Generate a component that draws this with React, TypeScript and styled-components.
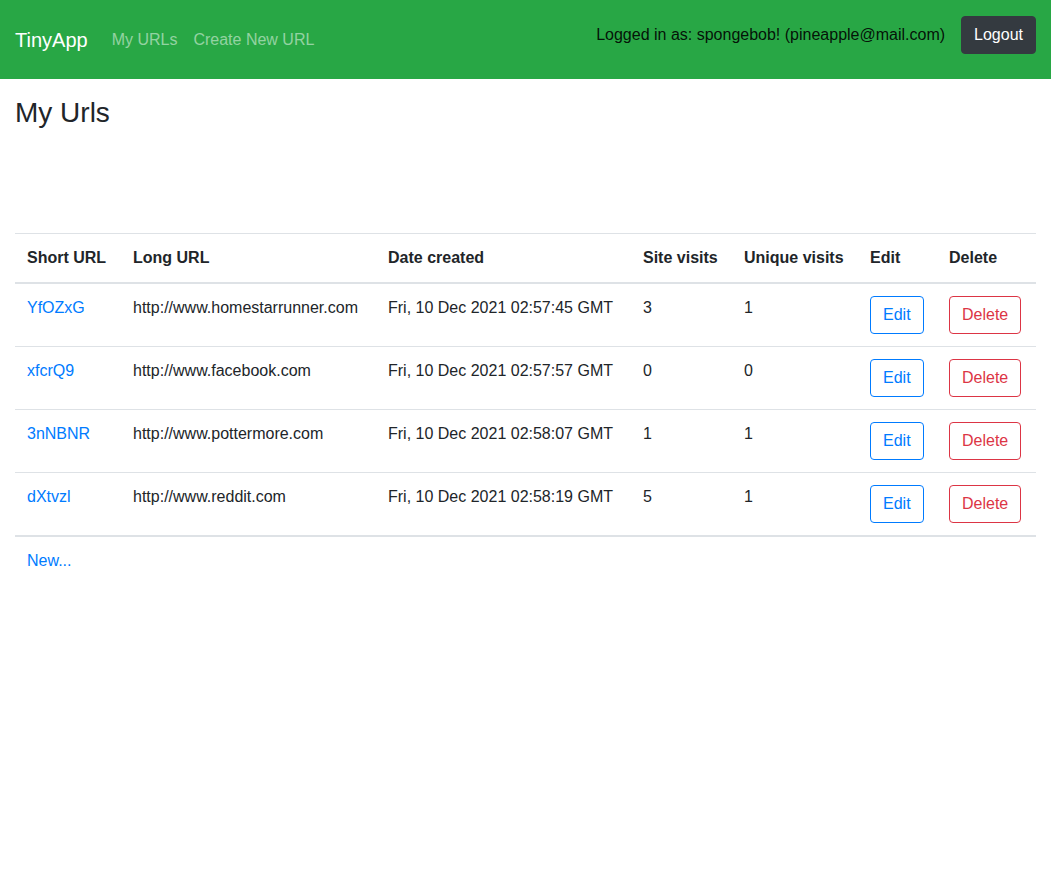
import React from "react";
import styled, { createGlobalStyle } from "styled-components";

const Global = createGlobalStyle`
  html, body { margin: 0; padding: 0; }
  body {
    font-family: "Liberation Sans", Arial, sans-serif;
    font-size: 16px;
    line-height: 1.5;
    color: #212529;
    background: #fff;
  }
  * { box-sizing: border-box; }
`;

const Navbar = styled.nav`
  display: flex;
  align-items: center;
  justify-content: space-between;
  height: 79px;
  padding: 0 15px;
  background: #28a745;
`;

const NavLeft = styled.div`
  display: flex;
  align-items: center;
`;

const Brand = styled.a`
  font-size: 20px;
  line-height: 30px;
  color: #fff;
  text-decoration: none;
  margin-right: 16px;
`;

const NavLink = styled.a`
  padding: 0 8px;
  font-size: 16px;
  line-height: 24px;
  color: rgba(255, 255, 255, 0.5);
  text-decoration: none;
  margin-top: 1px;
`;

const NavRight = styled.div`
  display: flex;
  align-items: center;
  gap: 16px;
  margin-bottom: 9px;
`;

const UserText = styled.span`
  color: rgba(0, 0, 0, 0.9);
`;

const DarkButton = styled.button`
  font-family: inherit;
  font-size: 16px;
  line-height: 24px;
  padding: 6px 12px;
  border: 1px solid #343a40;
  border-radius: 4px;
  background: #343a40;
  color: #fff;
  cursor: pointer;
`;

const Main = styled.main`
  padding: 0 15px;
`;

const Title = styled.h3`
  margin: 17px 0 103px;
  font-size: 28px;
  font-weight: 400;
  line-height: 1.2;
`;

const Table = styled.table`
  width: 100%;
  border-collapse: collapse;
  table-layout: fixed;
`;

const Th = styled.th`
  padding: 12px;
  text-align: left;
  vertical-align: bottom;
  font-weight: 700;
  border-top: 1px solid #dee2e6;
  border-bottom: 2px solid #dee2e6;
`;

const Td = styled.td<{ $noBorder?: boolean }>`
  padding: 12px;
  vertical-align: top;
  border-top: ${(p) => (p.$noBorder ? "none" : "1px solid #dee2e6")};
  white-space: nowrap;
`;

const FootBody = styled.tbody`
  border-top: 2px solid #dee2e6;
`;

const Link = styled.a`
  color: #007bff;
  text-decoration: none;
`;

const OutlineButton = styled.button<{ $tone: string }>`
  font-family: inherit;
  font-size: 16px;
  line-height: 24px;
  padding: 6px 12px;
  border: 1px solid ${(p) => p.$tone};
  border-radius: 4px;
  background: transparent;
  color: ${(p) => p.$tone};
  cursor: pointer;
`;

const cols = [106, 255, 255, 101, 126, 79, 99];
const headers = ["Short URL", "Long URL", "Date created", "Site visits", "Unique visits", "Edit", "Delete"];

const rows = [
  { id: "YfOZxG", url: "http://www.homestarrunner.com", date: "Fri, 10 Dec 2021 02:57:45 GMT", visits: 3, unique: 1 },
  { id: "xfcrQ9", url: "http://www.facebook.com", date: "Fri, 10 Dec 2021 02:57:57 GMT", visits: 0, unique: 0 },
  { id: "3nNBNR", url: "http://www.pottermore.com", date: "Fri, 10 Dec 2021 02:58:07 GMT", visits: 1, unique: 1 },
  { id: "dXtvzl", url: "http://www.reddit.com", date: "Fri, 10 Dec 2021 02:58:19 GMT", visits: 5, unique: 1 },
];

export default function App() {
  return (
    <>
      <Global />
      <Navbar>
        <NavLeft>
          <Brand href="#">TinyApp</Brand>
          <NavLink href="#">My URLs</NavLink>
          <NavLink href="#">Create New URL</NavLink>
        </NavLeft>
        <NavRight>
          <UserText>Logged in as: spongebob! (pineapple@mail.com)</UserText>
          <DarkButton>Logout</DarkButton>
        </NavRight>
      </Navbar>
      <Main>
        <Title>My Urls</Title>
        <Table>
          <colgroup>
            {cols.map((w, i) => (
              <col key={i} style={{ width: w }} />
            ))}
          </colgroup>
          <thead>
            <tr>
              {headers.map((h) => (
                <Th key={h}>{h}</Th>
              ))}
            </tr>
          </thead>
          <tbody>
            {rows.map((r) => (
              <tr key={r.id}>
                <Td>
                  <Link href="#">{r.id}</Link>
                </Td>
                <Td>{r.url}</Td>
                <Td>{r.date}</Td>
                <Td>{r.visits}</Td>
                <Td>{r.unique}</Td>
                <Td>
                  <OutlineButton $tone="#007bff">Edit</OutlineButton>
                </Td>
                <Td>
                  <OutlineButton $tone="#dc3545">Delete</OutlineButton>
                </Td>
              </tr>
            ))}
          </tbody>
          <FootBody>
            <tr>
              <Td $noBorder>
                <Link href="#">New...</Link>
              </Td>
              <Td $noBorder colSpan={6} />
            </tr>
          </FootBody>
        </Table>
      </Main>
    </>
  );
}
